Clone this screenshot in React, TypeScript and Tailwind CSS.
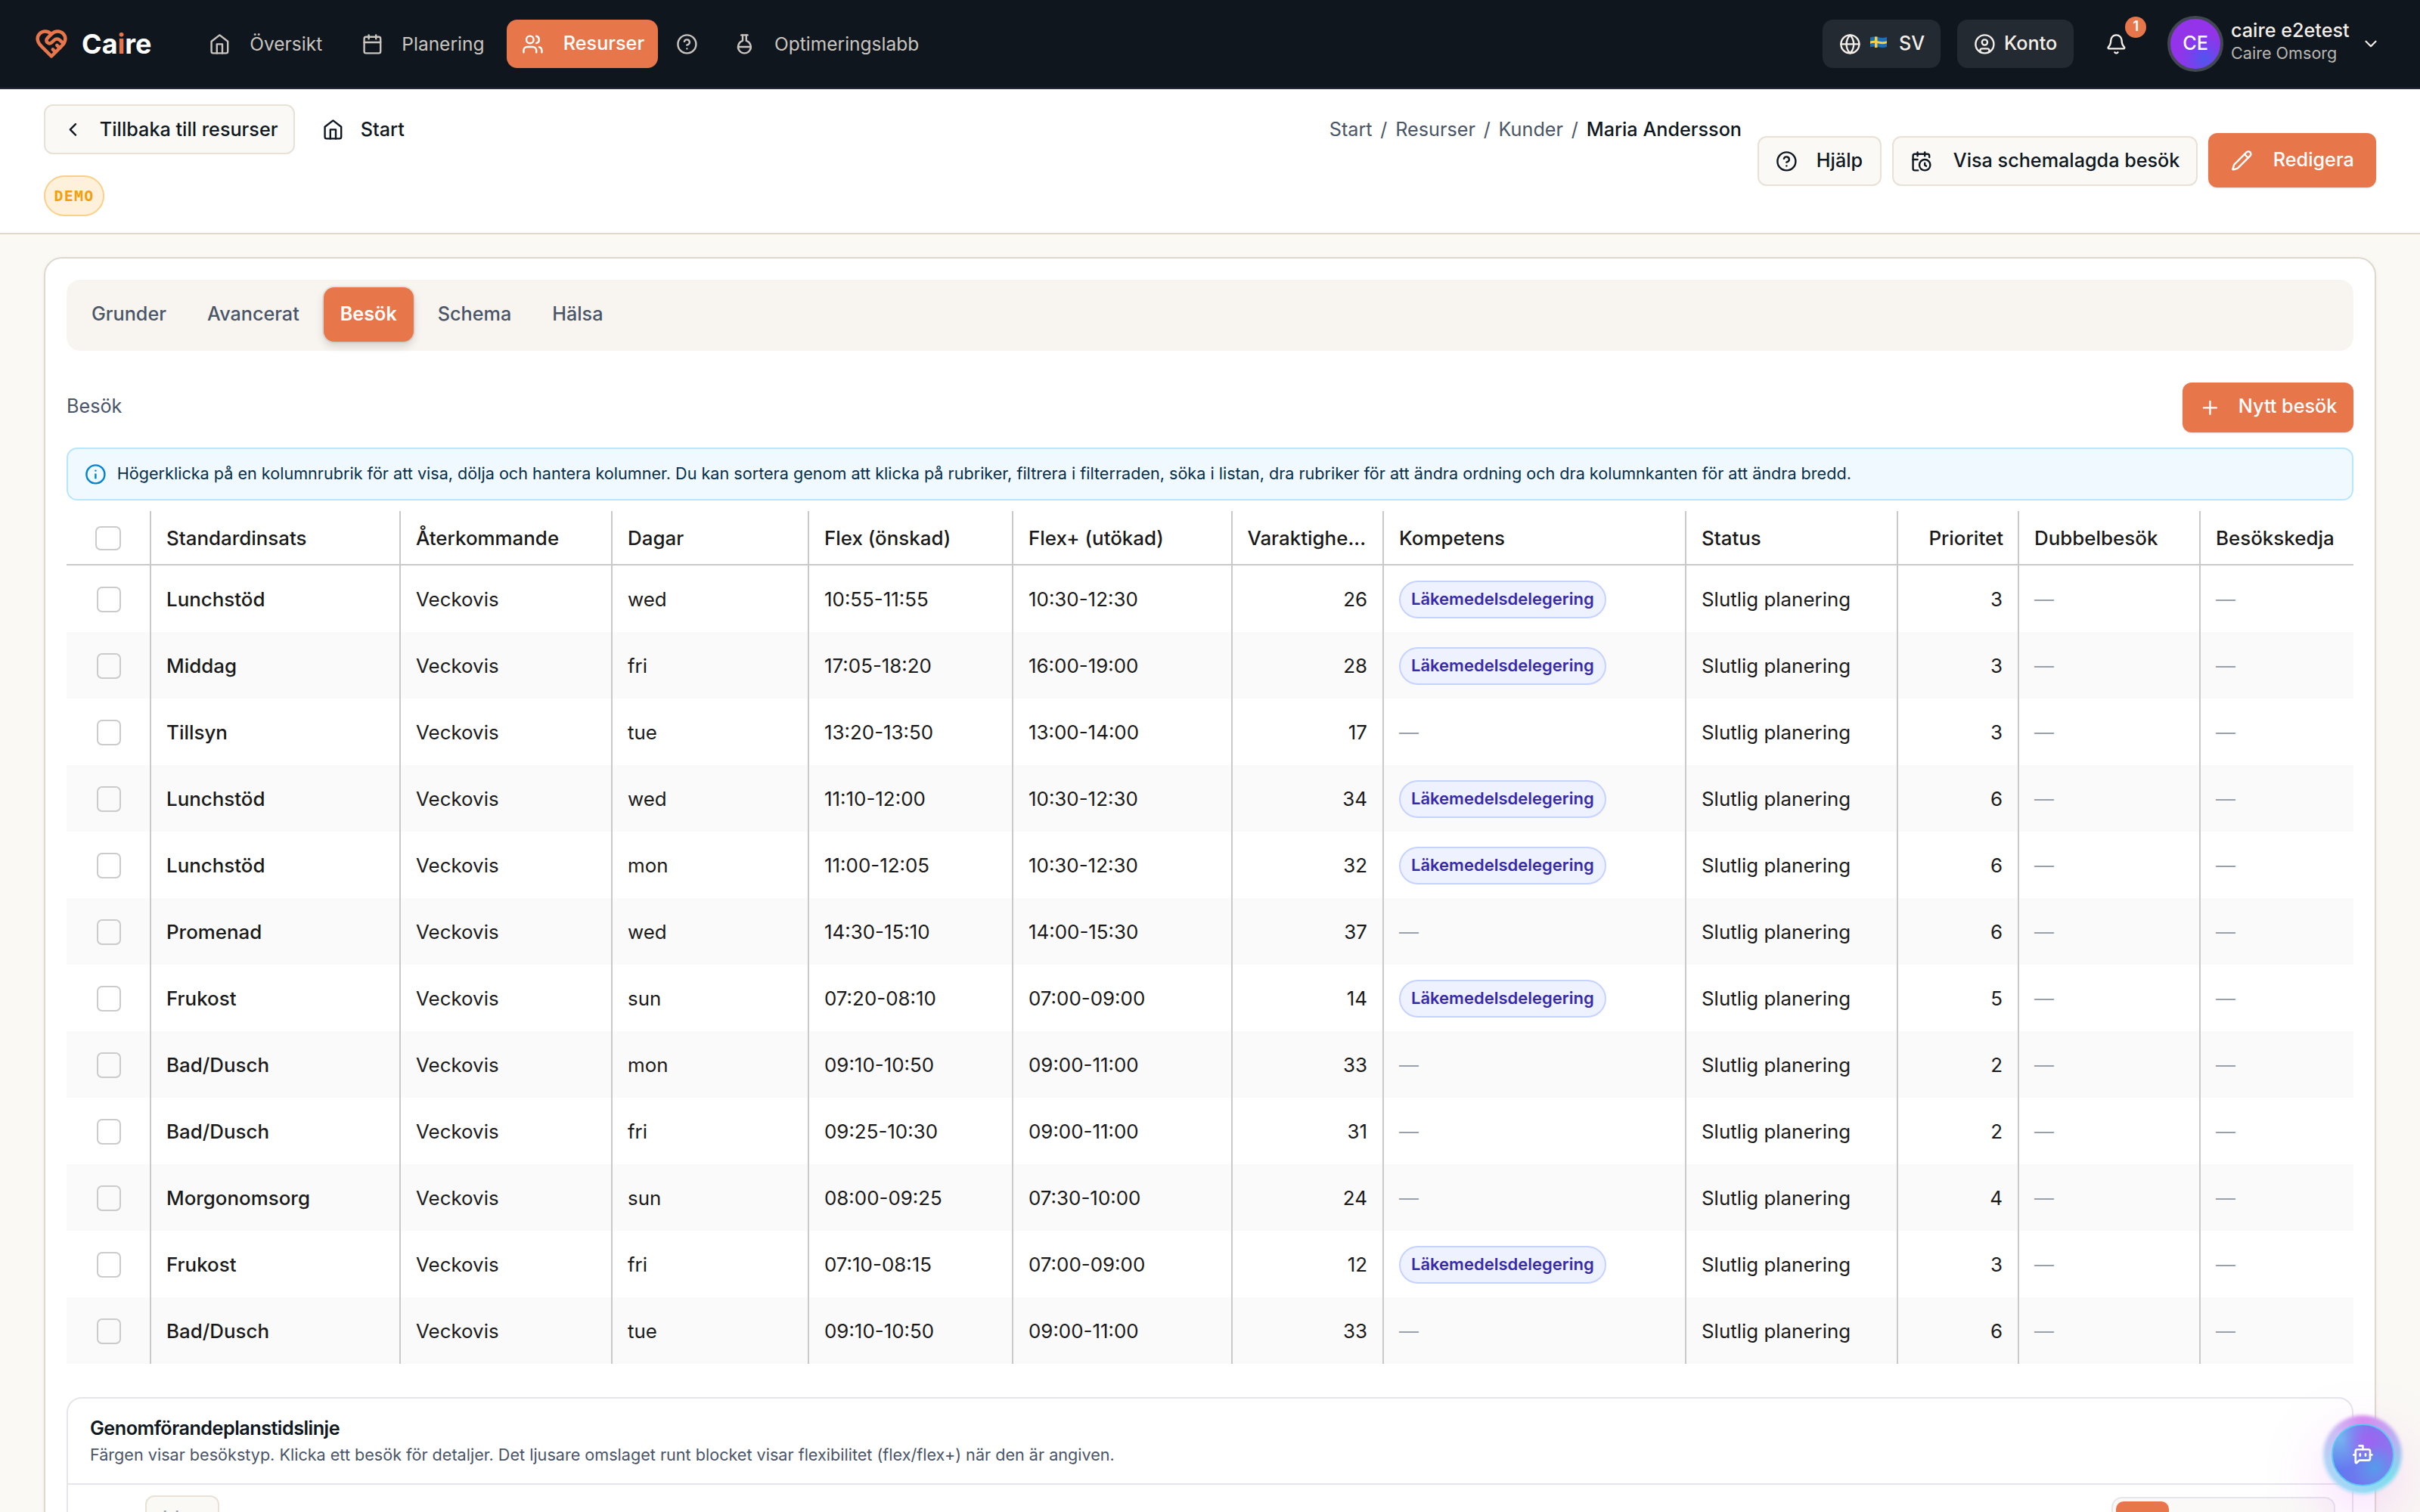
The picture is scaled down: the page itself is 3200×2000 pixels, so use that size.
import {
  Bell,
  BotMessageSquare,
  Calendar,
  CalendarClock,
  ChevronDown,
  ChevronLeft,
  CircleHelp,
  CircleUser,
  FlaskRound,
  Globe,
  Info,
  Pencil,
  Plus,
  Users,
} from 'lucide-react';

interface Visit {
  name: string;
  day: string;
  flex: string;
  flexPlus: string;
  duration: number;
  delegated: boolean;
  priority: number;
}

const VISITS: Visit[] = [
  { name: 'Lunchstöd', day: 'wed', flex: '10:55-11:55', flexPlus: '10:30-12:30', duration: 26, delegated: true, priority: 3 },
  { name: 'Middag', day: 'fri', flex: '17:05-18:20', flexPlus: '16:00-19:00', duration: 28, delegated: true, priority: 3 },
  { name: 'Tillsyn', day: 'tue', flex: '13:20-13:50', flexPlus: '13:00-14:00', duration: 17, delegated: false, priority: 3 },
  { name: 'Lunchstöd', day: 'wed', flex: '11:10-12:00', flexPlus: '10:30-12:30', duration: 34, delegated: true, priority: 6 },
  { name: 'Lunchstöd', day: 'mon', flex: '11:00-12:05', flexPlus: '10:30-12:30', duration: 32, delegated: true, priority: 6 },
  { name: 'Promenad', day: 'wed', flex: '14:30-15:10', flexPlus: '14:00-15:30', duration: 37, delegated: false, priority: 6 },
  { name: 'Frukost', day: 'sun', flex: '07:20-08:10', flexPlus: '07:00-09:00', duration: 14, delegated: true, priority: 5 },
  { name: 'Bad/Dusch', day: 'mon', flex: '09:10-10:50', flexPlus: '09:00-11:00', duration: 33, delegated: false, priority: 2 },
  { name: 'Bad/Dusch', day: 'fri', flex: '09:25-10:30', flexPlus: '09:00-11:00', duration: 31, delegated: false, priority: 2 },
  { name: 'Morgonomsorg', day: 'sun', flex: '08:00-09:25', flexPlus: '07:30-10:00', duration: 24, delegated: false, priority: 4 },
  { name: 'Frukost', day: 'fri', flex: '07:10-08:15', flexPlus: '07:00-09:00', duration: 12, delegated: true, priority: 3 },
  { name: 'Bad/Dusch', day: 'tue', flex: '09:10-10:50', flexPlus: '09:00-11:00', duration: 33, delegated: false, priority: 6 },
];

const COLUMNS = [
  { label: 'Standardinsats', className: 'border-r-2 px-5' },
  { label: 'Återkommande', className: 'border-r-2 px-5' },
  { label: 'Dagar', className: 'border-r-2 px-5' },
  { label: 'Flex (önskad)', className: 'border-r-2 px-5' },
  { label: 'Flex+ (utökad)', className: 'border-r-2 px-5' },
  { label: 'Varaktighe...', className: 'justify-end border-r-2 pr-[22px]' },
  { label: 'Kompetens', className: 'border-r-2 px-5' },
  { label: 'Status', className: 'border-r-2 px-5' },
  { label: 'Prioritet', className: 'justify-end border-r-2 px-[19px]' },
  { label: 'Dubbelbesök', className: 'border-r-2 px-5' },
  { label: 'Besökskedja', className: 'px-5' },
];

const GRID =
  'grid grid-cols-[112px_330px_280px_260px_270px_290px_200px_400px_280px_160px_240px_202px]';
const CELL = 'flex items-center border-r-2 border-[#c9c9c9] px-5 pt-[2px] whitespace-nowrap';
const ICON = 'size-[28.8px] shrink-0';
const OUTLINE_BTN =
  'flex items-center rounded-[12px] border-2 border-[#e8e1d6] bg-[#faf9f5] font-medium whitespace-nowrap';

function HomeIcon() {
  return (
    <svg viewBox="0 0 24 24" className={ICON} fill="none" stroke="currentColor" strokeWidth="2" strokeLinecap="round" strokeLinejoin="round">
      <path d="m3 9 9-7 9 7v11a2 2 0 0 1-2 2H5a2 2 0 0 1-2-2z" />
      <path d="M9 22V12h6v10" />
    </svg>
  );
}

function Logo() {
  return (
    <div className="flex items-center">
      <svg viewBox="0 0 24 24" className="size-[44px] text-[#e8764b]" fill="none" stroke="currentColor" strokeWidth="2.5" strokeLinecap="round" strokeLinejoin="round">
        <path d="M19 14c1.49-1.46 3-3.21 3-5.5A5.5 5.5 0 0 0 16.5 3c-1.76 0-3 .5-4.5 2-1.5-1.5-2.74-2-4.5-2A5.5 5.5 0 0 0 2 8.5c0 2.3 1.5 4.05 3 5.5l7 7Z" />
        <path d="M12 5 9.04 7.96a2.17 2.17 0 0 0 0 3.08c.82.82 2.13.85 3 .07l2.07-1.9a2.82 2.82 0 0 1 3.79 0l2.96 2.66" />
        <path d="m18 15-2-2" />
        <path d="m15 18-2-2" />
      </svg>
      <span className="ml-[18px] text-[36px] font-bold text-white">
        Ca<span className="text-[#e8764b]">i</span>re
      </span>
    </div>
  );
}

function Flag() {
  return (
    <svg viewBox="0 0 22 16" className="h-[16px] w-[22px] shrink-0">
      <path d="M0 1.5Q5.5 -.5 11 1.2T22 1v13q-5.500 2-11 .3T0 14.500z" fill="#1a6fb5" />
      <path d="M6 .5h3.500v14.500H6z" fill="#f9d03c" />
      <path d="M0 6.600Q5.500 5 11 6.500T22 6.300v3q-5.500 1.600-11 .2T0 9.700z" fill="#f9d03c" />
    </svg>
  );
}

function TopNav() {
  return (
    <header className="flex h-[118px] items-center border-b-2 border-[#252c37] bg-[#0f161e] pl-[46px] text-[#c9c5be]">
      <div className="w-[230px]">
        <Logo />
      </div>
      <nav className="flex items-center text-[24.500px]">
        <div className="flex w-[202px] items-center gap-[25.500px]">
          <HomeIcon />
          Översikt
        </div>
        <div className="flex w-[192px] items-center gap-[24.500px]">
          <Calendar className={ICON} />
          Planering
        </div>
        <div className="flex h-16 w-[200px] items-center gap-[26px] rounded-[14px] bg-[#e8764b] pl-5 text-[25.200px] font-medium text-white">
          <Users className={ICON} />
          Resurser
        </div>
        <CircleHelp className={`${ICON} mr-[47.500px] ml-6`} />
        <FlaskRound className={`${ICON} mr-[25px]`} />
        Optimeringslabb
      </nav>
      <div className="ml-auto flex items-center pr-[52px] font-medium text-[#f3eee7]">
        <div className="flex h-16 w-[156px] items-center rounded-[14px] bg-[#232a32] pl-[22px]">
          <Globe className={ICON} />
          <span className="mr-[16px] ml-[12px] flex pb-1">
            <Flag />
          </span>
          SV
        </div>
        <div className="ml-[22px] flex h-16 w-[154px] items-center gap-[11px] rounded-[14px] bg-[#232a32] pl-[22px]">
          <CircleUser className={ICON} />
          Konto
        </div>
        <div className="relative ml-[42px]">
          <Bell className={ICON} />
          <span className="absolute -top-[22px] left-[26px] flex size-7 items-center justify-center rounded-full bg-[#e8764b] text-[19px] font-semibold text-white">
            1
          </span>
        </div>
        <div className="ml-[53px] flex size-[74px] items-center justify-center rounded-full border-4 border-[#414852] bg-[radial-gradient(circle_at_68%_80%,#4f55ee_0%,#7a3fec_28%,#9333ea_50%)] text-[25.200px] text-white">
          CE
        </div>
        <div className="ml-[10px] w-[172px] pb-2 whitespace-nowrap">
          <div className="text-[25.200px] leading-[32px]">caire e2etest</div>
          <div className="text-[21.600px] leading-[28px] font-normal text-[#b9b6b1]">Caire Omsorg</div>
        </div>
        <ChevronDown className="size-[26px]" />
      </div>
    </header>
  );
}

function PageHeader() {
  return (
    <div className="flex h-[192px] border-b-2 border-[#e0d8cd] bg-white px-[58px] pt-5 text-[#0f1720]">
      <div>
        <div className="flex items-center">
          <div className={`${OUTLINE_BTN} h-[66px] w-[332px] pl-[22px]`}>
            <ChevronLeft className={ICON} />
            <span className="ml-[21px] pt-[2px]">Tillbaka till resurser</span>
          </div>
          <div className="ml-[36px] flex items-center gap-[22px] font-medium">
            <HomeIcon />
            <span className="pt-[2px]">Start</span>
          </div>
        </div>
        <div className="mt-7 flex h-[54px] w-[80px] items-center justify-center rounded-full border-2 border-[#fbcf86] bg-[#fdf1dc] font-['DejaVu_Sans_Mono',monospace] text-[20px] font-bold tracking-[1.200px] text-[#f59e0b]">
          DEMO
        </div>
      </div>
      <div className="ml-auto flex">
        <div className="mr-[21px] flex h-[66px] items-center gap-[10.800px] pt-[2px] whitespace-nowrap text-[#4a5565]">
          <span>Start</span>
          <span>/</span>
          <span>Resurser</span>
          <span>/</span>
          <span>Kunder</span>
          <span>/</span>
          <span className="font-medium text-[#0f1720]">Maria Andersson</span>
        </div>
        <div className="mt-[38px] flex h-[72px] items-center gap-[14px]">
          <div className={`${OUTLINE_BTN} mt-[2px] h-[66px] w-[164px] gap-[25px] pl-[22px]`}>
            <CircleHelp className={ICON} />
            Hjälp
          </div>
          <div className={`${OUTLINE_BTN} mt-[2px] h-[66px] w-[404px] gap-[28px] pl-[22px]`}>
            <CalendarClock className={ICON} />
            Visa schemalagda besök
          </div>
          <div className="flex h-[72px] w-[222px] items-center gap-[27px] rounded-[12px] bg-[#e8764b] pl-[30px] font-medium text-white shadow-sm">
            <Pencil className={ICON} />
            Redigera
          </div>
        </div>
      </div>
    </div>
  );
}

function Tabs() {
  return (
    <div className="flex h-[94px] items-center gap-[10px] rounded-[18px] bg-[#f8f5f0] px-[11px] pb-[2px] font-medium text-[#4a5568]">
      <div className="px-[22px]">Grunder</div>
      <div className="px-[22px]">Avancerat</div>
      <div className="flex h-[72px] items-center rounded-[14px] bg-[#e8764b] px-[22px] font-semibold text-white shadow-[0_0_0_2px_rgba(0,0,0,0.06),0_6px_12px_rgba(0,0,0,0.14)]">
        Besök
      </div>
      <div className="px-[22px]">Schema</div>
      <div className="px-[22px]">Hälsa</div>
    </div>
  );
}

function Dash() {
  return <span className="text-[#99a1af]">—</span>;
}

function VisitRow({ visit }: { visit: Visit }) {
  return (
    <div className={`${GRID} h-[88px] even:bg-[#fafafa]`}>
      <div className="flex items-center border-r-2 border-[#c9c9c9] pt-[2px] pl-10">
        <span className="h-[34px] w-8 rounded-[7px] border-2 border-[#cbcbcb]" />
      </div>
      <div className={`${CELL} font-medium`}>{visit.name}</div>
      <div className={CELL}>Veckovis</div>
      <div className={CELL}>{visit.day}</div>
      <div className={CELL}>{visit.flex}</div>
      <div className={CELL}>{visit.flexPlus}</div>
      <div className={`${CELL} justify-end`}>{visit.duration}</div>
      <div className={CELL}>
        {visit.delegated ? (
          <span className="flex h-[50px] items-center rounded-full border-2 border-[#c6d2ff] bg-[#eef2ff] px-[14px] pb-[1px] text-[22px] font-semibold text-[#372aac]">
            Läkemedelsdelegering
          </span>
        ) : (
          <Dash />
        )}
      </div>
      <div className={CELL}>Slutlig planering</div>
      <div className={`${CELL} justify-end`}>{visit.priority}</div>
      <div className={CELL}>
        <Dash />
      </div>
      <div className="flex items-center px-5 pt-[2px]">
        <Dash />
      </div>
    </div>
  );
}

function VisitTable() {
  return (
    <div className="mt-[14px] text-[25.920px] text-[#1a1a1a]">
      <div className={`${GRID} h-[72px] border-b-2 border-[#c9c9c9] font-medium`}>
        <div className={`${CELL} justify-center`}>
          <span className="h-8 w-[34px] rounded-[7px] border-2 border-[#cbcbcb]" />
        </div>
        {COLUMNS.map((c) => (
          <div
            key={c.label}
            className={`flex items-center border-[#c9c9c9] pt-[3px] whitespace-nowrap ${c.className}`}
          >
            {c.label}
          </div>
        ))}
      </div>
      <div>
        {VISITS.map((v, i) => (
          <VisitRow key={i} visit={v} />
        ))}
      </div>
    </div>
  );
}

function Timeline() {
  return (
    <section className="mt-11 h-[300px] rounded-[20px] border-2 border-[#e5e5ec]">
      <div className="h-[114px] border-b-2 border-[#e5e5ec] px-[29px] pt-[21px]">
        <h3 className="text-[25.200px] leading-[36px] font-semibold tracking-[-0.5px] text-[#0f1720]">
          Genomförandeplanstidslinje
        </h3>
        <p className="text-[21.600px] leading-[35px] text-[#4a5568]">
          Färgen visar besökstyp. Klicka ett besök för detaljer. Det ljusare omslaget runt blocket visar
          flexibilitet (flex/flex+) när den är angiven.
        </p>
      </div>
      <div className="flex items-start justify-between pt-[14px] pr-[22px] pl-[102px]">
        <div className={`${OUTLINE_BTN} h-[61px] w-[98px] justify-center text-[#9ca3af]`}>Idag</div>
        <div className="mt-[2px] h-[72px] w-[296px] rounded-[14px] border-2 border-[#e5e5ec] bg-[#faf9f7] p-1">
          <div className="h-[60px] w-[70px] rounded-[10px] bg-[#e8764b]" />
        </div>
      </div>
    </section>
  );
}

function ChatButton() {
  return (
    <div className="absolute top-[1872px] left-[3072px] flex size-[104px] items-center justify-center">
      <div className="absolute inset-0 rounded-full shadow-[0_30px_80px_rgba(232,121,249,0.28)]" />
      <div className="absolute inset-0 rounded-full bg-[conic-gradient(from_0deg,#d98af0,#b7b4f2_70deg,#7fdcee_125deg,#9ad8f5_180deg,#b3d3f6_260deg,#cdbdf5_310deg,#d98af0)] blur-[2px]" />
      <div className="relative flex size-[83px] items-center justify-center rounded-full border-2 border-[#5cc8f2] bg-[radial-gradient(circle_at_70%_72%,rgba(80,160,235,0.9),transparent_38%),radial-gradient(circle_at_58%_26%,rgba(160,100,240,1),transparent_42%),radial-gradient(circle_at_10%_22%,#78b4f0,transparent_45%),linear-gradient(90deg,#5b7af0,#8f74ee)]">
        <BotMessageSquare className="size-[28.8px] text-white" strokeWidth={2.2} />
      </div>
    </div>
  );
}

export default function App() {
  return (
    <div className="relative h-[2000px] w-[3200px] overflow-hidden bg-[#faf9f4] font-[Inter,sans-serif] text-[25.200px] leading-normal">
      <TopNav />
      <PageHeader />
      <main className="mx-[58px] mt-[30px] h-[1800px] rounded-[24px] border-2 border-[#e0d8cd] bg-white px-7 pt-7 shadow-[0_2px_6px_rgba(0,0,0,0.05)]">
        <Tabs />
        <div className="mt-[42px] flex h-[66px] items-center justify-between">
          <span className="pb-[2px] text-[#4a5568]">Besök</span>
          <div className="flex h-[66px] w-[226px] items-center gap-[23px] rounded-[12px] bg-[#e8764b] pl-[22px] font-medium text-white shadow-sm">
            <Plus className={ICON} />
            <span className="pb-[2px]">Nytt besök</span>
          </div>
        </div>
        <div className="mt-5 flex h-[70px] items-center gap-[14px] rounded-[14px] border-2 border-[#b8e6fe] bg-[#f0f9ff] pl-[22px] text-[21.600px] text-[#052f4a]">
          <Info className={`${ICON} text-[#0084d1]`} />
          <p className="pb-[1px]">
            Högerklicka på en kolumnrubrik för att visa, dölja och hantera kolumner. Du kan sortera genom
            att klicka på rubriker, filtrera i filterraden, söka i listan, dra rubriker för att ändra
            ordning och dra kolumnkanten för att ändra bredd.
          </p>
        </div>
        <VisitTable />
        <Timeline />
      </main>
      <ChatButton />
    </div>
  );
}
